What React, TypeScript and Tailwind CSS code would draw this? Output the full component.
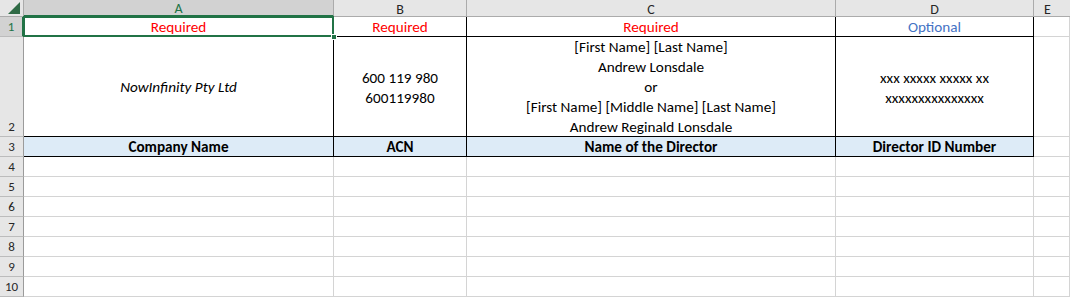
import React from "react";

const font = { fontFamily: '"Carlito", "Lato", "Noto Sans", sans-serif' };

function ColHead({ label, selected }: { label: string; selected?: boolean }) {
  return (
    <div
      className={
        selected
          ? "flex items-center justify-center border-r border-b-2 border-r-[#ababab] border-b-[#217346] bg-[#d2d2d2] pt-[2px] text-[14px] text-[#217346]"
          : "flex items-center justify-center border-r border-b border-[#ababab] bg-[#e6e6e6] pt-[2px] text-[14px] text-[#262626]"
      }
    >
      {label}
    </div>
  );
}

function RowHead({ n, selected }: { n: number; selected?: boolean }) {
  return (
    <div
      className={
        selected
          ? "flex items-end justify-center border-r-2 border-b border-r-[#217346] border-b-[#bcbcbc] bg-[#d2d2d2] text-[13px] leading-[18px] text-[#217346]"
          : "flex items-end justify-center border-r border-b border-r-[#9b9b9b] border-b-[#bcbcbc] bg-[#e6e6e6] text-[13px] leading-[18px] text-[#262626]"
      }
    >
      {n}
    </div>
  );
}

export default function App() {
  const emptyRows = [4, 5, 6, 7, 8, 9, 10];
  const plain = "border-r border-b border-[#d4d4d4]";
  const boxed = "border-r border-b border-black";

  return (
    <div
      className="grid h-[297px] w-[1070px] grid-cols-[24px_310px_133px_369px_198px_1fr] grid-rows-[17px_20px_100px_20px_repeat(7,20px)] overflow-hidden bg-white text-[15.2px] text-black"
      style={font}
    >
      {/* column headers */}
      <div className="relative border-r border-b border-[#ababab] bg-[#e6e6e6]">
        <div className="absolute bottom-[2px] right-[3px] h-0 w-0 border-b-[12px] border-l-[12px] border-b-[#2f6a45] border-l-transparent" />
      </div>
      <ColHead label="A" selected />
      <ColHead label="B" />
      <ColHead label="C" />
      <ColHead label="D" />
      <div className="flex items-center border-b border-[#ababab] bg-[#e6e6e6] pl-[10px] pt-[2px] text-[14px] text-[#262626]">
        E
      </div>

      {/* row 1 */}
      <RowHead n={1} selected />
      <div className={`relative flex items-center justify-center ${boxed} pt-[2px] text-[#ff0000]`}>
        Required
        <div className="absolute -left-[1px] -top-[1px] -right-[1px] -bottom-[1px] border-2 border-[#217346]" />
        <div className="absolute -bottom-[4px] -right-[4px] h-[6px] w-[6px] border border-white bg-[#217346]" />
      </div>
      <div className={`flex items-center justify-center ${boxed} pt-[2px] text-[#ff0000]`}>Required</div>
      <div className={`flex items-center justify-center ${boxed} pt-[2px] text-[#ff0000]`}>Required</div>
      <div className={`flex items-center justify-center ${boxed} pt-[2px] text-[#4472c4]`}>Optional</div>
      <div className={plain} />

      {/* row 2 */}
      <RowHead n={2} />
      <div className={`flex items-center justify-center ${boxed} pt-[2px] italic`}>NowInfinity Pty Ltd</div>
      <div className={`flex flex-col items-center justify-center ${boxed} pt-[2px] leading-[20px]`}>
        <span>600 119 980</span>
        <span>600119980</span>
      </div>
      <div className={`flex flex-col items-center justify-center ${boxed} pt-[1px] leading-[20px]`}>
        <span>[First Name] [Last Name]</span>
        <span>Andrew Lonsdale</span>
        <span>or</span>
        <span>[First Name] [Middle Name] [Last Name]</span>
        <span>Andrew Reginald Lonsdale</span>
      </div>
      <div className={`flex flex-col items-center justify-center ${boxed} pt-[2px] leading-[20px]`}>
        <span>xxx xxxxx xxxxx xx</span>
        <span>xxxxxxxxxxxxxxx</span>
      </div>
      <div className={plain} />

      {/* row 3 */}
      <RowHead n={3} />
      <div className={`flex items-center justify-center ${boxed} bg-[#ddebf7] pt-[2px] font-bold`}>Company Name</div>
      <div className={`flex items-center justify-center ${boxed} bg-[#ddebf7] pt-[2px] font-bold`}>ACN</div>
      <div className={`flex items-center justify-center ${boxed} bg-[#ddebf7] pt-[2px] font-bold`}>Name of the Director</div>
      <div className={`flex items-center justify-center ${boxed} bg-[#ddebf7] pt-[2px] font-bold`}>Director ID Number</div>
      <div className={plain} />

      {/* empty rows */}
      {emptyRows.map((n) => (
        <React.Fragment key={n}>
          <RowHead n={n} />
          <div className={plain} />
          <div className={plain} />
          <div className={plain} />
          <div className={plain} />
          <div className={plain} />
        </React.Fragment>
      ))}
    </div>
  );
}
